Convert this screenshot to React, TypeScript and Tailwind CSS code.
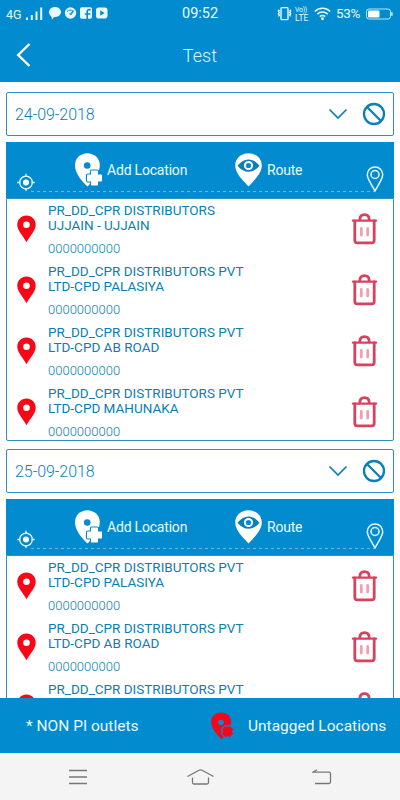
type Day = { date: string; outlets: [string, string][] };

const PHONE = "0000000000";

const days: Day[] = [
  {
    date: "24-09-2018",
    outlets: [
      ["PR_DD_CPR DISTRIBUTORS", "UJJAIN - UJJAIN"],
      ["PR_DD_CPR DISTRIBUTORS PVT", "LTD-CPD PALASIYA"],
      ["PR_DD_CPR DISTRIBUTORS PVT", "LTD-CPD AB ROAD"],
      ["PR_DD_CPR DISTRIBUTORS PVT", "LTD-CPD MAHUNAKA"],
    ],
  },
  {
    date: "25-09-2018",
    outlets: [
      ["PR_DD_CPR DISTRIBUTORS PVT", "LTD-CPD PALASIYA"],
      ["PR_DD_CPR DISTRIBUTORS PVT", "LTD-CPD AB ROAD"],
      ["PR_DD_CPR DISTRIBUTORS PVT", ""],
    ],
  },
];

function StatusBar() {
  return (
    <div className="flex h-7 items-center text-[#e8fbff]">
      <span className="ml-[6px] mt-[3px] w-[19px] text-[12.5px] leading-none">4G</span>
      <svg className="ml-[1px] shrink-0" width="84" height="16" viewBox="0 0 84 16" fill="currentColor">
        <path d="M0 11.500h2v2.500H0zM4.800 9h2v5h-2zM9.500 5.500h2V14h-2zM14.200 1.500h2V14h-2z" />
        <path d="M29 1c3.400 0 6 2.200 6 5s-2.600 5-6 5l-.8 0-2.200 2.400-.6-3C23.800 9.400 23 7.800 23 6c0-2.800 2.600-5 6-5z" />
        <circle cx="44.500" cy="7" r="5.700" />
        <path d="M41 5.500c1.600-1.500 4-1.800 5.800-.8M43.500 8l4-3.200-2.600 4.200z" fill="none" stroke="#038bd0" />
        <rect x="54" y="1.200" width="12" height="11.500" rx="1.800" />
        <path d="M61.200 13V5.800c0-1.400.8-2.200 2.200-2.200h1.300M58.800 8h5.600" fill="none" stroke="#038bd0" strokeWidth="1.600" />
        <rect x="70" y="1.500" width="11.500" height="11" rx="2.800" />
        <path d="M74.200 4.300v5.400L78.500 7z" fill="#038bd0" />
      </svg>
      <span className="ml-[72px] w-10 shrink-0 pt-px text-[14.5px] leading-none">09:52</span>
      <svg className="ml-[55px] shrink-0" width="15" height="16" viewBox="0 0 15 16" fill="none" stroke="currentColor" strokeWidth="1.400">
        <rect x="4" y="1.600" width="7" height="12" rx=".8" />
        <path d="M2.400 3.800l-1 1.300 1 1.300-1 1.300 1 1.300-1 1.400M12.700 3.800l1 1.300-1 1.300 1 1.300-1 1.300 1 1.400" />
      </svg>
      <div className="ml-[3px] w-[17px] shrink-0">
        <p className="whitespace-nowrap text-[7px] leading-[8px] tracking-[-0.3px]">Vo))</p>
        <p className="text-[8.5px] leading-[8px]">LTE</p>
      </div>
      <svg className="ml-[2px] shrink-0" width="17" height="14" viewBox="0 0 17 14" fill="none" stroke="currentColor" strokeWidth="1.500">
        <path d="M.8 4.500a11 11 0 0 1 15.400 0M3.300 7.100a7.400 7.400 0 0 1 10.400 0M5.800 9.600a3.800 3.800 0 0 1 5.400 0" />
        <circle cx="8.500" cy="11.800" r=".7" fill="currentColor" />
      </svg>
      <span className="ml-[5px] w-[29px] shrink-0 text-[13.5px] leading-none tracking-[-0.3px]">53%</span>
      <svg className="shrink-0" width="28" height="13" viewBox="0 0 28 13" fill="none" stroke="currentColor">
        <rect x="1.500" y="1" width="24" height="10" rx="2.500" strokeOpacity=".8" />
        <rect x="3" y="2.500" width="11.500" height="7" rx="1" fill="#fff" stroke="none" />
        <path d="M26.900 4.200v3.600" strokeWidth="1.300" />
      </svg>
    </div>
  );
}

function AddPin() {
  return (
    <svg width="28" height="34" viewBox="0 0 28 34">
      <path d="M12.300.2C5.500.2 0 5.200 0 12c0 8 6 15.500 12.500 21.500 6-6 12.300-13.500 12.300-21.500C24.800 5.200 19 .2 12.300.2z" fill="#fff" />
      <circle cx="12.200" cy="12.500" r="3.300" fill="#038bd0" />
      <path d="M16.700 18.200h5.600v4h4v5.600h-4v4h-5.600v-4h-4v-5.600h4z" fill="#fff" stroke="#038bd0" strokeWidth="3.600" strokeLinejoin="round" />
      <path d="M16.700 18.200h5.600v4h4v5.600h-4v4h-5.600v-4h-4v-5.600h4z" fill="#fff" stroke="#fff" strokeWidth="1.400" strokeLinejoin="round" />
    </svg>
  );
}

function RoutePin() {
  return (
    <svg width="28" height="34" viewBox="0 0 28 34">
      <path d="M13.500.2C6 .2.200 5.300.200 12.500c0 7.500 7.300 14.500 13.300 21 6-6.500 13.300-13.500 13.300-21C26.800 5.300 21 .2 13.500.2z" fill="#fff" />
      <path d="M2.500 12.700C6 8.500 9.500 6.500 13.500 6.500s7.500 2 11 6.200c-3.500 4-7 6-11 6s-7.500-2-11-6z" fill="#0b80b8" />
      <circle cx="13.500" cy="12.500" r="3.600" fill="#038bd0" stroke="#fff" strokeWidth="2" />
    </svg>
  );
}

function TrashIcon() {
  return (
    <svg width="27" height="32" viewBox="0 0 27 32" fill="none" stroke="#d8425f" strokeLinecap="round">
      <path d="M2 7.600h23" strokeWidth="2.400" />
      <path d="M8.800 6.500C8.900 3.400 10.700 1.700 13.500 1.700s4.600 1.700 4.700 4.800" strokeWidth="2.800" />
      <path d="M3.800 8v19.200c0 1.700.9 2.700 2.500 2.700h14.400c1.600 0 2.500-1 2.500-2.700V8" strokeWidth="2.800" />
      <path d="M10.300 15.500v6.500M16.700 15.500v6.500" stroke="#eda0af" strokeWidth="2.800" />
    </svg>
  );
}

function DateBox({ date }: { date: string }) {
  return (
    <div className="flex h-[44px] shrink-0 items-center rounded-[2px] border border-[#2f8fbd] bg-white pl-[8px] pr-[7px]">
      <span className="flex-1 pt-[2px] text-[16px] font-light leading-none tracking-[-0.05px] text-[#0b80b4]">{date}</span>
      <svg className="mr-[14px]" width="20" height="12" viewBox="0 0 20 12" fill="none" stroke="#0b80b4" strokeWidth="1.700">
        <path d="M1.500 1.500 10 10l8.500-8.500" />
      </svg>
      <svg width="24" height="24" viewBox="0 0 24 24" fill="none" stroke="#0b80b8" strokeWidth="2.300">
        <circle cx="12" cy="12" r="10" />
        <path d="M5 5l14 14" />
      </svg>
    </div>
  );
}

function ActionBand() {
  return (
    <div className="relative flex h-[56px] shrink-0 bg-[#038bd0] text-[14px] tracking-[-0.2px] text-[#e8fbff]">
      <svg className="absolute inset-0" width="388" height="56" fill="none" stroke="#e8fbff">
        <circle cx="20" cy="40.500" r="6.300" strokeWidth="1.300" />
        <circle cx="20" cy="40.500" r="3" fill="#fff" stroke="none" />
        <path d="M20 31.800v3M20 46v3M11.300 40.500h3M25.700 40.500h3" strokeWidth="1.300" />
        <path d="M25 49.500h343" stroke="#5fbce6" strokeDasharray="3 3" />
        <path d="M369 25c-4.500 0-7.700 3.200-7.700 7.700 0 4.300 4.400 9.800 7.700 16.200 3.300-6.400 7.700-11.900 7.700-16.200 0-4.500-3.200-7.700-7.700-7.700z" strokeWidth="1.500" />
        <circle cx="369" cy="32.500" r="4" strokeWidth="1.500" />
      </svg>
      <button className="ml-[69px] flex h-[56px] w-[160px] items-center gap-[4px]">
        <AddPin />
        <span className="whitespace-nowrap">Add Location</span>
      </button>
      <button className="flex h-[56px] items-center gap-[4px]">
        <RoutePin />
        <span>Route</span>
      </button>
    </div>
  );
}

function OutletRow({ name }: { name: [string, string] }) {
  return (
    <div className="flex h-[61px] items-center pl-[10px] pr-[15px] text-[#0b7fb0]">
      <svg className="mb-[2px]" width="19" height="28" viewBox="0 0 19 28">
        <path d="M9.500.5C4.300.5.300 4.500.300 9.700c0 6.300 6 11 9.200 17.600 3.200-6.600 9.200-11.300 9.200-17.600C18.700 4.500 14.700.5 9.500.5z" fill="#fb0616" />
        <circle cx="9.500" cy="9.800" r="3.300" fill="#fff" />
      </svg>
      <div className="ml-[12px] h-[54px] flex-1 whitespace-nowrap">
        <p className="h-[31px] text-[13.5px] leading-[15.5px]">
          {name[0]}
          <br />
          {name[1]}
        </p>
        <p className="mt-[7px] text-[13px] font-light leading-[15px]">{PHONE}</p>
      </div>
      <span className="mb-[2px]">
        <TrashIcon />
      </span>
    </div>
  );
}

function DaySection({ day }: { day: Day }) {
  return (
    <section className="mb-[8px]">
      <DateBox date={day.date} />
      <div className="mt-[6px]">
        <ActionBand />
        <div className="h-[243px] overflow-hidden rounded-b-[2px] border border-[#2f8fbd] bg-white">
          {day.outlets.map((name) => (
            <OutletRow key={name[1]} name={name} />
          ))}
        </div>
      </div>
    </section>
  );
}

export default function App() {
  return (
    <div className="flex h-[800px] w-[400px] flex-col overflow-hidden bg-white font-['Roboto',sans-serif]">
      <header className="h-[82px] shrink-0 bg-[#038bd0]">
        <StatusBar />
        <div className="flex h-[54px] items-center">
          <svg className="ml-[15px]" width="17" height="26" viewBox="0 0 17 26" fill="none" stroke="#fff" strokeWidth="2.400">
            <path d="M14.500 2 3.200 13l11.300 11" />
          </svg>
          <h1 className="flex-1 pr-[32px] text-center text-[18px] font-light tracking-[0.1px] text-[#dff6ff]">Test</h1>
        </div>
      </header>

      <main className="min-h-0 flex-1 overflow-hidden px-[6px] pt-[10px]">
        {days.map((day) => (
          <DaySection key={day.date} day={day} />
        ))}
      </main>

      <footer className="flex h-[55px] shrink-0 items-center bg-[#038bd0] text-[15.5px] text-[#e8fbff]">
        <span className="ml-[26px] w-[185px] pt-[2px]">* NON PI outlets</span>
        <svg width="23" height="28" viewBox="0 0 23 28">
          <path d="M10 .5C4.500.5.200 4.300.200 9.800c0 6.300 5.200 12.500 10.300 17.500C15 22.800 20 16.500 20 9.800 20 4.300 15.500.5 10 .5z" fill="#f4061b" />
          <circle cx="10" cy="10.500" r="2.800" fill="#038bd0" />
          <g transform="rotate(45 16.500 19.500)" strokeLinejoin="round">
            <path d="M14.500 15h4v2.500H21v4h-2.500V24h-4v-2.500H12v-4h2.500z" fill="#038bd0" stroke="#038bd0" strokeWidth="4" />
            <path d="M14.500 15h4v2.500H21v4h-2.500V24h-4v-2.500H12v-4h2.500z" fill="#f4061b" stroke="#f4061b" strokeWidth="1.800" />
          </g>
        </svg>
        <span className="ml-[14px] whitespace-nowrap pt-[2px]">Untagged Locations</span>
      </footer>

      <nav className="flex h-[47px] shrink-0 items-center bg-[#f4f4f4]">
        <svg className="ml-[69px]" width="18" height="16" fill="none" stroke="#777" strokeWidth="1.300">
          <path d="M0 1.500h18M0 8h18M0 14.500h18" />
        </svg>
        <svg className="ml-[100px]" width="27" height="16" fill="none" stroke="#777" strokeWidth="1.300">
          <path d="M.5 7.500 12 1.200q1.500-.8 3 0l11.500 6.300M5.500 8.500v5q0 1.500 1.500 1.500h4M16 15h4q1.500 0 1.500-1.500v-5M11 15h5" />
        </svg>
        <svg className="ml-[98px]" width="20" height="16" fill="none" stroke="#777" strokeWidth="1.300">
          <path d="M5 .8 1 3.200h16q1.500 0 1.500 1.500V13q0 1.500-1.500 1.500H3" />
        </svg>
      </nav>
    </div>
  );
}
